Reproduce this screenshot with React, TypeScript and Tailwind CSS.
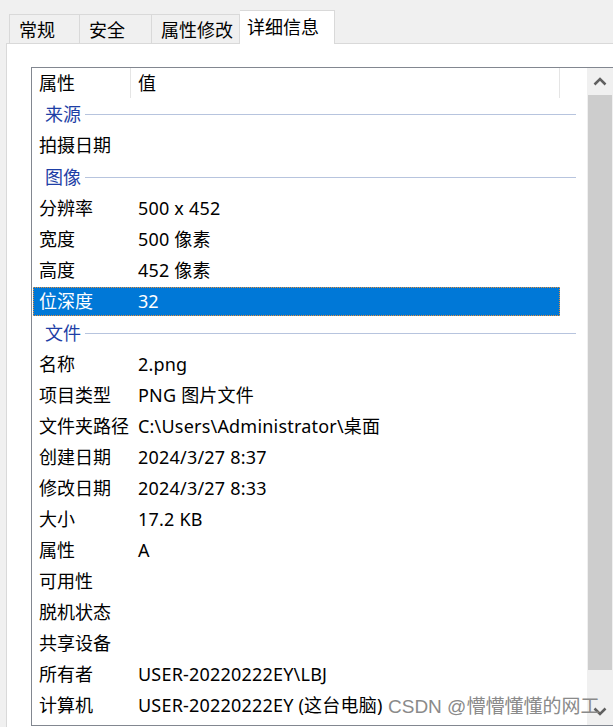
import React from "react"

type Item = { k: string; v?: string; group?: boolean; selected?: boolean }

const items: Item[] = [
  { k: "来源", group: true },
  { k: "拍摄日期" },
  { k: "图像", group: true },
  { k: "分辨率", v: "500 x 452" },
  { k: "宽度", v: "500 像素" },
  { k: "高度", v: "452 像素" },
  { k: "位深度", v: "32", selected: true },
  { k: "文件", group: true },
  { k: "名称", v: "2.png" },
  { k: "项目类型", v: "PNG 图片文件" },
  { k: "文件夹路径", v: "C:\\Users\\Administrator\\桌面" },
  { k: "创建日期", v: "2024/3/27 8:37" },
  { k: "修改日期", v: "2024/3/27 8:33" },
  { k: "大小", v: "17.2 KB" },
  { k: "属性", v: "A" },
  { k: "可用性" },
  { k: "脱机状态" },
  { k: "共享设备" },
  { k: "所有者", v: "USER-20220222EY\\LBJ" },
  { k: "计算机", v: "USER-20220222EY (这台电脑)" },
]

const tabs = [
  { label: "常规", w: "w-[71px]" },
  { label: "安全", w: "w-[72px]" },
  { label: "属性修改", w: "w-[88px]" },
]

function Row({ item, first }: { item: Item; first: boolean }) {
  if (item.group) {
    return (
      <div className={`flex items-center pl-[13px] pr-[11px] ${first ? "h-[31px]" : "h-[32px]"}`}>
        <span className="text-[#1e3fa6]">{item.k}</span>
        <div className="ml-[4px] h-px flex-1 bg-[#b7c4de]" />
      </div>
    )
  }
  if (item.selected) {
    return (
      <div className="h-[31px] flex items-center">
        <div className="ml-px w-[527px] h-[29px] flex items-center bg-[#0078d7] text-white border border-dotted border-[#e8903a]">
          <span className="w-[97px] pl-[5px]">{item.k}</span>
          <span className="pl-[7px]">{item.v}</span>
        </div>
      </div>
    )
  }
  return (
    <div className="h-[31px] flex items-center whitespace-nowrap">
      <span className="w-[99px] shrink-0 pl-[7px]">{item.k}</span>
      <span className="pl-[7px] tracking-[0.2px]">{item.v}</span>
    </div>
  )
}

export default function App() {
  return (
    <div
      className="relative w-[613px] h-[727px] overflow-hidden bg-[#f0f0f0] text-[18px] text-black"
      style={{ fontFamily: '"Noto Sans", "Noto Sans CJK SC", sans-serif' }}
    >
      <div className="h-[43px] flex items-end pl-[9px]">
        {tabs.map((t, i) => (
          <div
            key={t.label}
            className={`${t.w} h-[29px] flex items-center pt-[3px] pl-[9px] border-t border-[#d9d9d9] ${i === 0 ? "border-l" : ""} border-r`}
          >
            {t.label}
          </div>
        ))}
        <div className="relative z-10 -mb-px w-[95px] h-[34px] flex items-center pl-[7px] bg-white border-t border-r border-[#d9d9d9]">
          详细信息
        </div>
      </div>

      <div className="ml-[6px] h-[684px] bg-white border-l border-t border-[#d9d9d9] overflow-hidden">
        <div className="mt-[23px] ml-[24px] w-[583px] h-[659px] border border-[#828790] flex overflow-hidden">
          <div className="flex-1 overflow-hidden">
            <div className="h-[31px] flex">
              <div className="w-[99px] h-[30px] flex items-center pl-[7px] border-r border-[#e5e5e5]">属性</div>
              <div className="w-[429px] h-[30px] flex items-center pl-[7px] border-r border-[#e5e5e5]">值</div>
            </div>
            {items.map((it, i) => (
              <Row key={it.k + i} item={it} first={i === 0} />
            ))}
          </div>
          <div className="w-[26px] shrink-0 bg-[#f0f0f0] flex flex-col">
            <div className="h-[27px] flex items-center justify-center">
              <svg width="14" height="9" viewBox="0 0 14 9">
                <path d="M1.5 7.5 L7 2 L12.5 7.5" fill="none" stroke="#606060" strokeWidth="2.5" />
              </svg>
            </div>
            <div className="h-[575px] mx-px bg-[#cdcdcd]" />
            <div className="flex-1 flex items-end justify-center pb-[9px]">
              <svg width="14" height="9" viewBox="0 0 14 9">
                <path d="M1.5 1.5 L7 7 L12.5 1.5" fill="none" stroke="#606060" strokeWidth="2.5" />
              </svg>
            </div>
          </div>
        </div>
      </div>

      <div
        className="absolute left-[388px] top-[693px] text-[19px] text-[#8a8a8a] whitespace-nowrap"
        style={{ fontFamily: '"Liberation Sans", "Noto Sans CJK SC", sans-serif' }}
      >
        CSDN @懵懵懂懂的网工
      </div>
    </div>
  )
}
